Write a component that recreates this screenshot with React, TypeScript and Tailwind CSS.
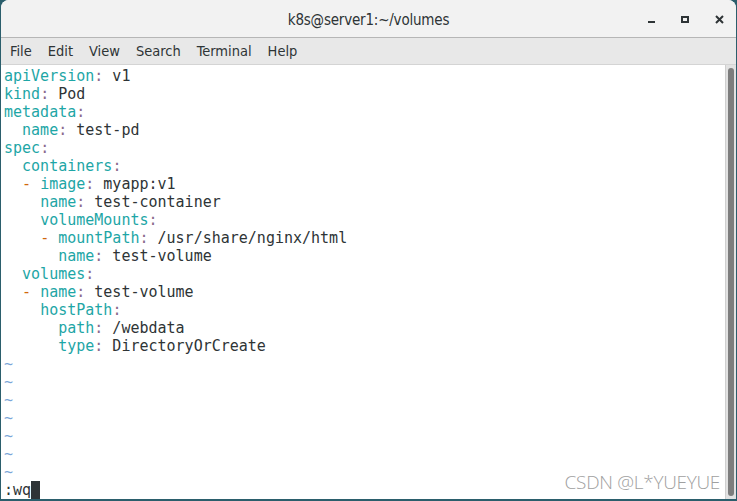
import React from "react"

type Seg = { t: string; c: "key" | "colon" | "val" | "dash" }

const K = (t: string): Seg => ({ t, c: "key" })
const C: Seg = { t: ":", c: "colon" }
const V = (t: string): Seg => ({ t, c: "val" })
const D: Seg = { t: "-", c: "dash" }
const S = (t: string): Seg => ({ t, c: "val" })

const lines: Seg[][] = [
  [K("apiVersion"), C, V(" v1")],
  [K("kind"), C, V(" Pod")],
  [K("metadata"), C],
  [S("  "), K("name"), C, V(" test-pd")],
  [K("spec"), C],
  [S("  "), K("containers"), C],
  [S("  "), D, S(" "), K("image"), C, V(" myapp:v1")],
  [S("    "), K("name"), C, V(" test-container")],
  [S("    "), K("volumeMounts"), C],
  [S("    "), D, S(" "), K("mountPath"), C, V(" /usr/share/nginx/html")],
  [S("      "), K("name"), C, V(" test-volume")],
  [S("  "), K("volumes"), C],
  [S("  "), D, S(" "), K("name"), C, V(" test-volume")],
  [S("    "), K("hostPath"), C],
  [S("      "), K("path"), C, V(" /webdata")],
  [S("      "), K("type"), C, V(" DirectoryOrCreate")],
]

const colorClass: Record<Seg["c"], string> = {
  key: "text-[#1ea6a6]",
  colon: "text-[#8a6a8c]",
  val: "text-[#2e3436]",
  dash: "text-[#d0680a]",
}

const menu = ["File", "Edit", "View", "Search", "Terminal", "Help"]

export default function App() {
  return (
    <div className="w-[737px] h-[501px] bg-[#2b5e6c] overflow-hidden">
      <div className="h-full mx-[1px] flex flex-col rounded-t-[8px] overflow-hidden bg-white">
        {/* Title bar */}
        <div className="relative h-[38px] shrink-0 bg-[#f2f2f2] border-b border-[#b6b6b6] flex items-center justify-center pt-[3px]">
          <span className="text-[15px] text-[#2e3436] [font-family:'DejaVu_Sans_Condensed','DejaVu_Sans',sans-serif] tracking-[-0.2px]">
            k8s@server1:~/volumes
          </span>
          <div className="absolute right-0 top-0 h-full flex items-center pt-[1px]">
            <div className="w-[34px] flex justify-center pt-[5px]">
              <div className="w-[7px] h-[2px] bg-[#2e3436]" />
            </div>
            <div className="w-[34px] flex justify-center">
              <div className="w-[8px] h-[7px] border-2 border-[#2e3436]" />
            </div>
            <div className="w-[34px] flex justify-center">
              <svg width="9" height="9" viewBox="0 0 9 9">
                <path d="M1 1L8 8M8 1L1 8" stroke="#2e3436" strokeWidth="2" />
              </svg>
            </div>
          </div>
        </div>

        {/* Menu bar */}
        <div className="h-[27px] shrink-0 bg-[#e8e8e8] border-b border-[#d4d4d4] flex items-center pl-[9px] pt-[2px] gap-[16px] text-[14.5px] text-[#2e3436] [font-family:'DejaVu_Sans_Condensed','DejaVu_Sans',sans-serif]">
          {menu.map((m) => (
            <span key={m}>{m}</span>
          ))}
        </div>

        {/* Terminal */}
        <div className="relative flex-1 flex min-h-0">
          <div className="flex-1 pl-[3px] pt-[2px] [font-family:'DejaVu_Sans_Mono',monospace] text-[15px] leading-[18px] whitespace-pre">
            {lines.map((l, i) => (
              <div key={i} className="h-[18px]">
                {l.map((s, j) => (
                  <span key={j} className={colorClass[s.c]}>
                    {s.t}
                  </span>
                ))}
              </div>
            ))}
            {Array.from({ length: 7 }).map((_, i) => (
              <div key={"t" + i} className="h-[18px] text-[#7aa6d8]">
                ~
              </div>
            ))}
            <div className="h-[18px] flex items-center text-[#2e3436]">
              <span>:wq</span>
              <span className="inline-block w-[9px] h-[18px] bg-[#2e3436]" />
            </div>
          </div>

          {/* Scrollbar */}
          <div className="w-[11px] shrink-0 bg-[#e2e2e2] border-l border-[#cfcfcf] py-[3px] flex justify-center">
            <div className="w-[6px] h-full rounded-full bg-[#7d7d7d]" />
          </div>

          <div className="absolute right-[16px] bottom-[3px] text-[19px] font-light text-[#a0a0a0] [font-family:'Open_Sans',sans-serif] tracking-[-0.3px]">
            CSDN @L*YUEYUE
          </div>
        </div>
        <div className="h-[2px] shrink-0 bg-[#2b5e6c]" />
      </div>
    </div>
  )
}
